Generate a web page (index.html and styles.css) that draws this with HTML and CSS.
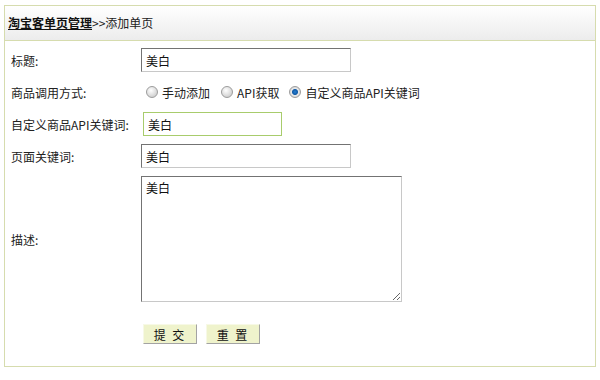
FILE: index.html
```html
<!DOCTYPE html>
<html>
<head>
    <meta charset="utf-8">
    <title>添加单页</title>
    <link rel="stylesheet" href="styles.css">
</head>
<body>
<div class="panel">
    <div class="panel-head">
        <a href="#" class="crumb">淘宝客单页管理</a>&gt;&gt;添加单页
    </div>
    <form class="form">
        <div class="row">
            <label class="label">标题:</label>
            <input type="text" class="field" value="美白">
        </div>
        <div class="row">
            <label class="label">商品调用方式:</label>
            <div class="radios">
                <label class="opt"><input type="radio" name="mode"> 手动添加</label>
                <label class="opt"><input type="radio" name="mode"> API获取</label>
                <label class="opt"><input type="radio" name="mode" checked> 自定义商品API关键词</label>
            </div>
        </div>
        <div class="row">
            <label class="label">自定义商品API关键词:</label>
            <input type="text" class="field field-focus" value="美白">
        </div>
        <div class="row">
            <label class="label">页面关键词:</label>
            <input type="text" class="field" value="美白">
        </div>
        <div class="row row-area">
            <label class="label">描述:</label>
            <textarea class="area">美白</textarea>
        </div>
        <div class="row row-btns">
            <span class="label"></span>
            <button type="button" class="btn">提 交</button>
            <button type="button" class="btn">重 置</button>
        </div>
    </form>
</div>
</body>
</html>
```

FILE: styles.css
```css
body {
    margin: 0;
    padding: 5px 4px 0 4px;
    background: #fff;
    font-family: "Noto Sans CJK SC", "DejaVu Sans", sans-serif;
    font-size: 12px;
    color: #222;
}

/* 外框 */
.panel {
    border: 1px solid #d6dcae;
    height: 360px;
}

.panel-head {
    height: 34px;
    line-height: 34px;
    padding-left: 3px;
    border-bottom: 1px solid #d6dcae;
    background: linear-gradient(#ffffff, #ececec);
    color: #222;
}

.crumb {
    color: #111;
    font-weight: bold;
    text-decoration: underline;
}

/* 表单 */
.form {
    padding: 7px 0 0 6px;
}

.row {
    display: flex;
    align-items: center;
    height: 24px;
    margin-bottom: 8px;
}

.label {
    width: 130px;
    flex: none;
}

.field {
    box-sizing: border-box;
    width: 210px;
    height: 24px;
    padding: 0 4px;
    margin: 0;
    border: 1px solid #c8c8c8;
    border-top-color: #737373;
    border-left-color: #737373;
    font-family: inherit;
    font-size: 12px;
    color: #111;
}

.field-focus {
    width: 139px;
    margin-left: 2px;
    border: 1px solid #a8cc6c;
    outline: none;
}

.radios {
    display: flex;
    gap: 11px;
    margin-left: 5px;
}

.radios .opt:nth-child(3) {
    margin-left: -1px;
}

.opt {
    display: flex;
    align-items: center;
    gap: 4px;
}

.opt input {
    appearance: none;
    width: 12px;
    height: 12px;
    margin: 0;
    border-radius: 50%;
    border: 1px solid #9c9c9c;
    background: radial-gradient(circle at 40% 35%, #ffffff, #d4d4d4 70%);
}

.opt input:checked {
    background: radial-gradient(circle, #2a7fd0 0, #0f5aa8 2.5px, #e8e8e8 3.5px, #cfcfcf 6px);
}

.row-area {
    height: 126px;
}

.area {
    box-sizing: border-box;
    width: 261px;
    height: 126px;
    margin: 0;
    padding: 2px 4px;
    border: 1px solid #c8c8c8;
    border-top-color: #737373;
    border-left-color: #737373;
    font-family: inherit;
    font-size: 12px;
    color: #111;
    resize: both;
}

.row-btns {
    height: 20px;
    margin-top: 22px;
}

.btn {
    width: 54px;
    height: 20px;
    margin: 0 7px 0 2px;
    padding: 0;
    border: 1px solid #f7f9e6;
    border-right-color: #a3a3a3;
    border-bottom-color: #a3a3a3;
    background: #eff3cc;
    font-family: inherit;
    font-size: 12px;
    color: #111;
    letter-spacing: 2px;
}
```
